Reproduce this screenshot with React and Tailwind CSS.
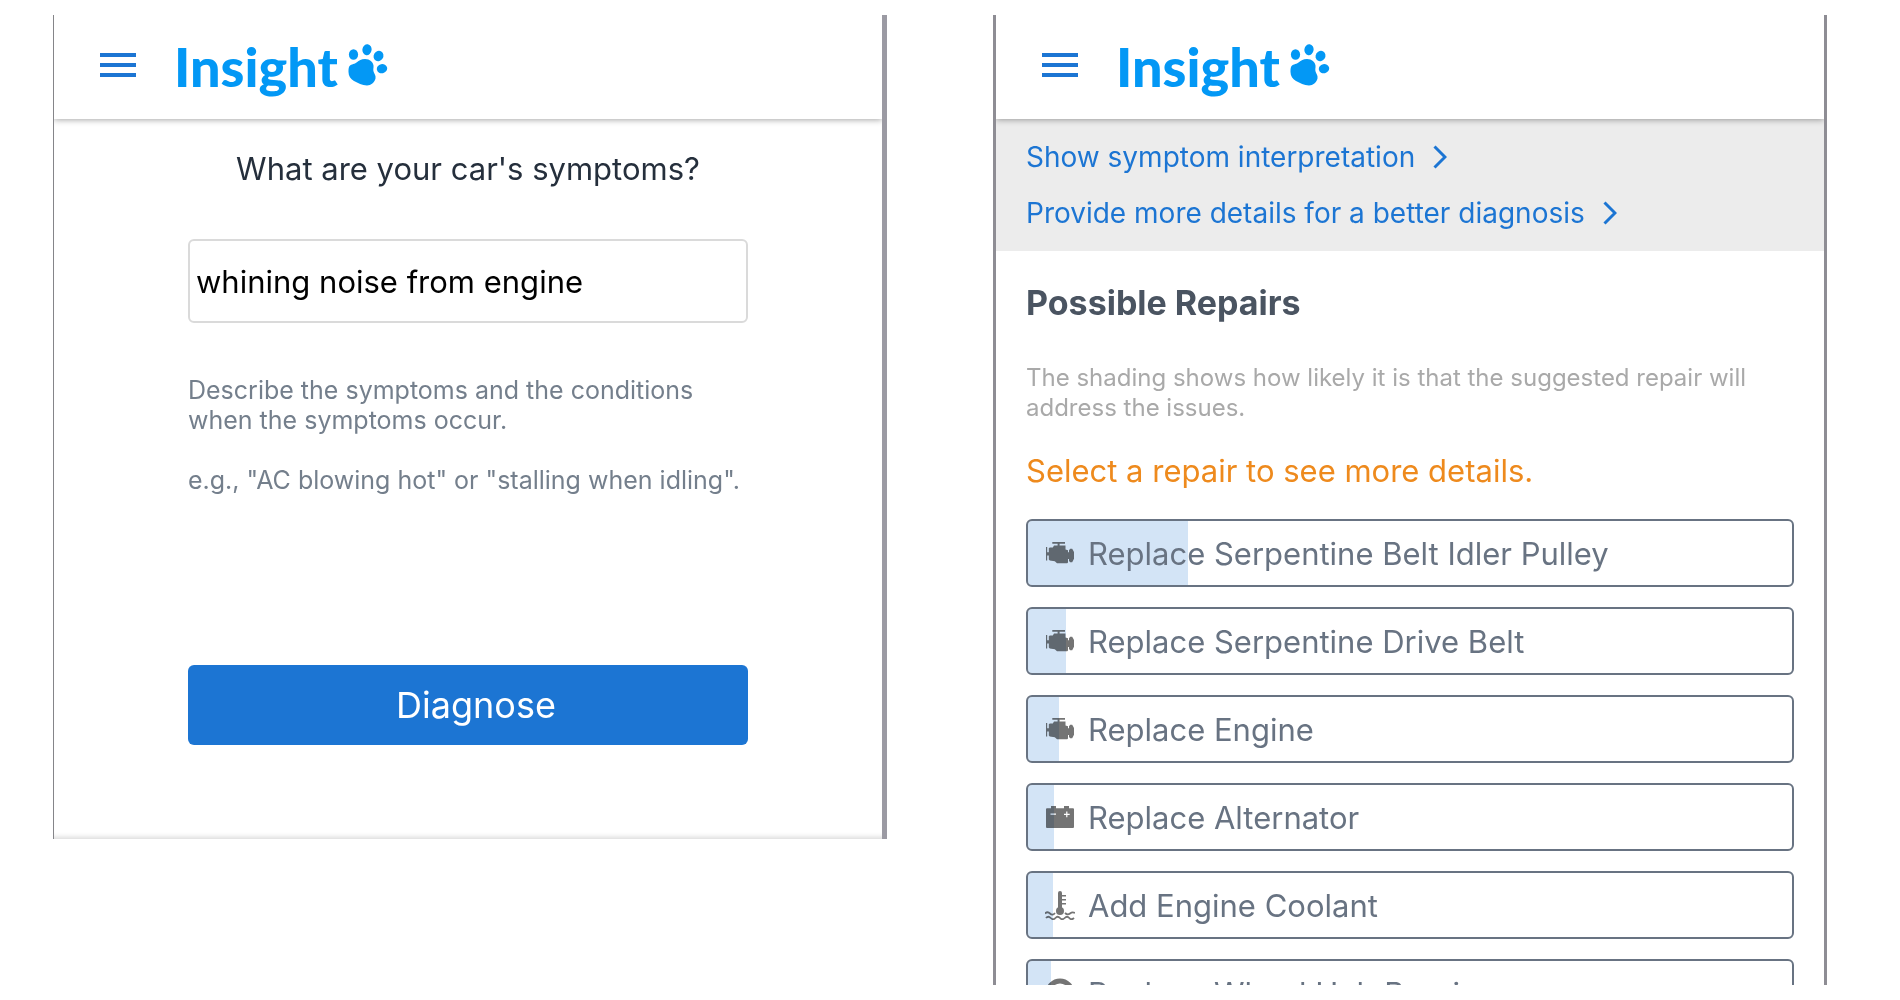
import React from 'react';

const repairs = [
  { name: 'Replace Serpentine Belt Idler Pulley', icon: 'engine', likelihood: 21 },
  { name: 'Replace Serpentine Drive Belt', icon: 'engine', likelihood: 5 },
  { name: 'Replace Engine', icon: 'engine', likelihood: 4 },
  { name: 'Replace Alternator', icon: 'battery', likelihood: 3.4 },
  { name: 'Add Engine Coolant', icon: 'coolant', likelihood: 3.3 },
  { name: 'Replace Wheel Hub Bearing', icon: 'wheel', likelihood: 3 },
];

const EngineIcon = () => (
  <svg viewBox="0 0 30 30" className="size-[30px]" fill="currentColor" aria-hidden="true">
    <path d="M7.300 4H20v1.700h-5.400v1.700h5.900v4l2.500.8v2h1v-2l1.200-1.400h2l1.800 3.200v6.800l-1.800 3.400h-2L24 23v-2h-1v3.500l-.8.700H12l-2.200-2-5-.8-1-1v-3.800H2.200v5H1V9h1.200v5.300h1.600v-4l1-.8h3l1.200-2.100h3.600V5.700H7.300z" />
  </svg>
);

const BatteryIcon = () => (
  <svg viewBox="0 0 30 30" className="size-[30px]" fill="currentColor" aria-hidden="true">
    <path fillRule="evenodd" d="M2 6.200h4V4h5v2.200h8V4h5v2.200h4a1 1 0 0 1 1 1V25a1 1 0 0 1-1 1H2a1 1 0 0 1-1-1V7.200a1 1 0 0 1 1-1zM5.500 11.500v1.200H11v-1.200zM21.200 9.500v2.300H19V13h2.200v2.300h1.200V13h2.300v-1.200h-2.300V9.500z" />
  </svg>
);

const CoolantIcon = () => (
  <svg viewBox="0 0 30 30" className="size-[30px]" fill="none" stroke="currentColor" aria-hidden="true">
    <path d="M15 3v18" strokeWidth="4" strokeLinecap="round" />
    <path d="M16 5.800h5M16 9.800h5M16 13.800h5" strokeWidth="1.500" />
    <circle cx="15" cy="21" r="4" fill="currentColor" stroke="none" />
    <path d="M0 23.500q2.500-2.500 5 0t5-.5M20 23q2.500 2.500 5 .5t5-.5M1 28q2.300-2.500 4.700 0t4.700 0 4.600 0 4.700 0 4.600 0 4.700 0" strokeWidth="1.800" />
  </svg>
);

const WheelIcon = () => (
  <svg viewBox="0 0 30 30" className="size-[30px]" fill="none" stroke="currentColor" aria-hidden="true">
    <circle cx="15" cy="15" r="12" strokeWidth="5" />
    <circle cx="15" cy="15" r="6" strokeWidth="2" />
  </svg>
);

const icons = {
  engine: EngineIcon,
  battery: BatteryIcon,
  coolant: CoolantIcon,
  wheel: WheelIcon,
};

const Paw = () => (
  <svg viewBox="0 0 40 42" className="w-10 h-[42px]" fill="currentColor" aria-hidden="true">
    <ellipse cx="5.500" cy="10.500" rx="4.600" ry="5.300" />
    <ellipse cx="19" cy="5.700" rx="4.600" ry="5.500" transform="rotate(8 19 5.700)" />
    <ellipse cx="30.500" cy="12" rx="4.800" ry="5.300" transform="rotate(32 30.500 12)" />
    <ellipse cx="34" cy="24.700" rx="5.200" ry="4.600" transform="rotate(-12 34 24.700)" />
    <path d="M1 23c1.500-3 4.500-2.500 7.500-4.500S13 15 17 15c5 0 8 3 8.500 6.500.3 2.500-.7 4 .2 6.500.8 2 2.300 3.500 1.800 6.500-1 4-4.500 7-8.500 7-5 0-9-2.500-13-4.500C2.500 35 .500 32 .500 28c0-2 0-3.500.5-5z" />
  </svg>
);

const Header = () => (
  <header className="relative flex items-center h-[104px] pl-[46px] bg-white shadow-[0_1px_6px_rgba(0,0,0,0.35)]">
    <button type="button" aria-label="Open menu" className="flex flex-col gap-[6px] w-9 mb-1">
      <span className="h-1 w-full bg-[#1c75d3]" />
      <span className="h-1 w-full bg-[#1c75d3]" />
      <span className="h-1 w-full bg-[#1c75d3]" />
    </button>
    <a href="#" className="flex items-center gap-[10px] ml-[38px] text-[#0398f5]">
      <span className="font-['Lato',sans-serif] font-black text-[54px] leading-[64px]">Insight</span>
      <span className="mb-1">
        <Paw />
      </span>
    </a>
  </header>
);

const SymptomForm = () => (
  <section className="pb-[94px] overflow-hidden border-l border-l-[#858589] border-r-[5px] border-r-[#9b9aa3] shadow-[inset_0_-6px_5px_-4px_rgba(0,0,0,0.15)]">
    <Header />
    <form className="w-full max-w-[560px] mx-auto pt-[30px]" onSubmit={(e) => e.preventDefault()}>
      <label htmlFor="symptoms" className="block text-center text-[31px] leading-10 text-[#252f3c]">
        What are your car's symptoms?
      </label>
      <input
        id="symptoms"
        type="text"
        defaultValue="whining noise from engine"
        className="block w-full h-[84px] mt-[50px] px-[6px] border-2 border-[#dadada] rounded-md text-[31px] text-black"
      />
      <p className="mt-[52px] text-[25px] leading-[30px] text-[#747f8c]">
        Describe the symptoms and the conditions when the symptoms occur.
      </p>
      <p className="mt-[30px] text-[25px] leading-[30px] text-[#747f8c] whitespace-nowrap">
        e.g., "AC blowing hot" or "stalling when idling".
      </p>
      <button type="submit" className="w-full h-20 mt-[170px] pl-4 rounded-md bg-[#1c75d3] text-4xl text-white">
        Diagnose
      </button>
    </form>
  </section>
);

const DetailLink = ({ children }) => (
  <a href="#" className="flex items-center gap-4 h-14 text-[28px] text-[#1c75d3] whitespace-nowrap">
    {children}
    <svg viewBox="0 0 16 24" className="w-4 h-6" fill="none" stroke="currentColor" strokeWidth="3" aria-hidden="true">
      <path d="M3.500 1.500L14 12 3.500 22.500" />
    </svg>
  </a>
);

const RepairRow = ({ name, icon, likelihood }) => {
  const Icon = icons[icon];
  return (
    <li>
      <button
        type="button"
        className="relative flex items-center gap-[13px] w-full h-[68px] pl-[17px] border-2 border-[#687382] rounded-md text-[31px] text-[#687382] overflow-hidden"
      >
        <span className="text-[#747474]">
          <Icon />
        </span>
        <span className="relative z-10 pt-0.5 whitespace-nowrap">{name}</span>
        <span
          className="absolute inset-y-0 left-0 bg-[#d3e4f6] mix-blend-multiply"
          style={{ width: `${likelihood}%` }}
        />
      </button>
    </li>
  );
};

const RepairResults = () => (
  <section className="h-[calc(100vh-30px)] overflow-hidden border-x-[3px] border-[#8e8d94]">
    <Header />
    <nav className="h-[132px] pt-[10px] pl-[30px] bg-[#ececec]">
      <DetailLink>Show symptom interpretation</DetailLink>
      <DetailLink>Provide more details for a better diagnosis</DetailLink>
    </nav>
    <div className="px-[30px] pt-8">
      <h2 className="text-[34px] leading-10 font-bold text-[#4a5461]">Possible Repairs</h2>
      <p className="mt-10 text-2xl leading-[30px] text-[#a9a9a9]">
        The shading shows how likely it is that the suggested repair will
        <br />
        address the issues.
      </p>
      <p className="mt-7 text-[31px] leading-10 text-[#ee8a1d]">Select a repair to see more details.</p>
      <ul className="flex flex-col gap-5 mt-7">
        {repairs.map((repair) => (
          <RepairRow key={repair.name} {...repair} />
        ))}
      </ul>
    </div>
  </section>
);

const App = () => (
  <main className="grid grid-cols-2 items-start gap-[106px] pt-[15px] pl-[53px] pr-[73px] bg-white font-['Inter',sans-serif]">
    <SymptomForm />
    <RepairResults />
  </main>
);

export default App;
